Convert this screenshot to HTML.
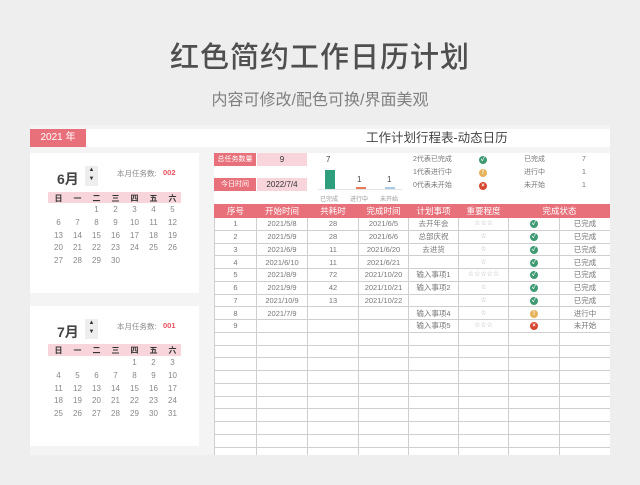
<!DOCTYPE html>
<html><head><meta charset="utf-8"><style>
*{margin:0;padding:0;box-sizing:border-box}
body{width:640px;height:485px;background:#eeeeee;position:relative;overflow:hidden;font-family:"Liberation Sans","Noto Sans CJK SC",sans-serif;color:#555}
.a{position:absolute;white-space:nowrap}
.c{text-align:center}
.wk div,.dy div{position:absolute;width:19px;text-align:center;font-size:8px}
.wk div{font-weight:bold;color:#333}
.dy div{color:#888}
.tw{position:absolute;left:214px;top:204px;width:396px;height:251px;overflow:hidden}
table{border-collapse:collapse;width:396px;table-layout:fixed}
td,th{height:12.75px;font-size:7.5px;text-align:center;border:1px solid #cfcfcf;color:#777;padding:0;line-height:11px;font-weight:normal;overflow:hidden}
th{background:#e8707a;color:#fff;font-size:8.5px;border-color:#e8707a;height:13px}
.ic{display:inline-block;width:8px;height:8px;border-radius:50%;color:#fff;font-size:6px;line-height:8px;vertical-align:middle;font-weight:bold;text-align:center}
.g{background:#3f9a72}.o{background:#e6b25a}.r{background:#d6472f}
.st{color:#aaa;font-size:7px;font-family:"DejaVu Sans",sans-serif;line-height:11px}
</style></head><body>
<div class="a c" style="left:0;width:640px;top:34px;font-size:29px;color:#4f4f4f;letter-spacing:1px;font-weight:500">红色简约工作日历计划</div>
<div class="a c" style="left:0;width:640px;top:86px;font-size:16px;color:#808080">内容可修改/配色可换/界面美观</div>

<div class="a" style="left:30px;top:125px;width:580px;height:330px;background:#f4f4f4"></div>
<div class="a" style="left:30px;top:129px;width:580px;height:18px;background:#fff"></div>
<div class="a c" style="left:30px;top:129px;width:56px;height:18px;background:#e8707a;color:#fff;font-size:10px;line-height:18px">2021 年</div>
<div class="a" style="left:366px;top:129px;font-size:12.5px;color:#444;line-height:18px">工作计划行程表-动态日历</div>

<div class="a" style="left:30px;top:153px;width:169px;height:140px;background:#fff"></div>
<div class="a" style="left:57px;top:169px;font-size:14px;font-weight:bold;color:#444">6月</div>
<div class="a c" style="left:85px;top:166px;width:13px;height:20px;background:#eee;font-size:6px;line-height:9px;color:#333">▲<br>▼</div>
<div class="a" style="left:117px;top:168px;font-size:7.5px;color:#888">本月任务数:</div>
<div class="a" style="left:163px;top:168px;font-size:7.5px;color:#e8505e;font-weight:bold">002</div>
<div class="a" style="left:48px;top:192px;width:133px;height:11px;background:#f7d5da"></div>
<div class="a wk" style="left:0;top:193px">
<div style="left:49px">日</div><div style="left:68px">一</div><div style="left:87px">二</div><div style="left:106px">三</div><div style="left:125px">四</div><div style="left:144px">五</div><div style="left:163px">六</div></div>
<div class="a dy" style="left:0;top:205px">
<div style="left:87px;top:0">1</div><div style="left:106px;top:0">2</div><div style="left:125px;top:0">3</div><div style="left:144px;top:0">4</div><div style="left:163px;top:0">5</div>
<div style="left:49px;top:13px">6</div><div style="left:68px;top:13px">7</div><div style="left:87px;top:13px">8</div><div style="left:106px;top:13px">9</div><div style="left:125px;top:13px">10</div><div style="left:144px;top:13px">11</div><div style="left:163px;top:13px">12</div>
<div style="left:49px;top:26px">13</div><div style="left:68px;top:26px">14</div><div style="left:87px;top:26px">15</div><div style="left:106px;top:26px">16</div><div style="left:125px;top:26px">17</div><div style="left:144px;top:26px">18</div><div style="left:163px;top:26px">19</div>
<div style="left:49px;top:38px">20</div><div style="left:68px;top:38px">21</div><div style="left:87px;top:38px">22</div><div style="left:106px;top:38px">23</div><div style="left:125px;top:38px">24</div><div style="left:144px;top:38px">25</div><div style="left:163px;top:38px">26</div>
<div style="left:49px;top:51px">27</div><div style="left:68px;top:51px">28</div><div style="left:87px;top:51px">29</div><div style="left:106px;top:51px">30</div></div>

<div class="a" style="left:30px;top:306px;width:169px;height:140px;background:#fff"></div>
<div class="a" style="left:57px;top:322px;font-size:14px;font-weight:bold;color:#444">7月</div>
<div class="a c" style="left:85px;top:319px;width:13px;height:20px;background:#eee;font-size:6px;line-height:9px;color:#333">▲<br>▼</div>
<div class="a" style="left:117px;top:321px;font-size:7.5px;color:#888">本月任务数:</div>
<div class="a" style="left:163px;top:321px;font-size:7.5px;color:#e8505e;font-weight:bold">001</div>
<div class="a" style="left:48px;top:344px;width:133px;height:12px;background:#f7d5da"></div>
<div class="a wk" style="left:0;top:345px">
<div style="left:49px">日</div><div style="left:68px">一</div><div style="left:87px">二</div><div style="left:106px">三</div><div style="left:125px">四</div><div style="left:144px">五</div><div style="left:163px">六</div></div>
<div class="a dy" style="left:0;top:358px">
<div style="left:125px;top:0">1</div><div style="left:144px;top:0">2</div><div style="left:163px;top:0">3</div>
<div style="left:49px;top:13px">4</div><div style="left:68px;top:13px">5</div><div style="left:87px;top:13px">6</div><div style="left:106px;top:13px">7</div><div style="left:125px;top:13px">8</div><div style="left:144px;top:13px">9</div><div style="left:163px;top:13px">10</div>
<div style="left:49px;top:26px">11</div><div style="left:68px;top:26px">12</div><div style="left:87px;top:26px">13</div><div style="left:106px;top:26px">14</div><div style="left:125px;top:26px">15</div><div style="left:144px;top:26px">16</div><div style="left:163px;top:26px">17</div>
<div style="left:49px;top:38px">18</div><div style="left:68px;top:38px">19</div><div style="left:87px;top:38px">20</div><div style="left:106px;top:38px">21</div><div style="left:125px;top:38px">22</div><div style="left:144px;top:38px">23</div><div style="left:163px;top:38px">24</div>
<div style="left:49px;top:51px">25</div><div style="left:68px;top:51px">26</div><div style="left:87px;top:51px">27</div><div style="left:106px;top:51px">28</div><div style="left:125px;top:51px">29</div><div style="left:144px;top:51px">30</div><div style="left:163px;top:51px">31</div></div>

<div class="a" style="left:214px;top:153px;width:396px;height:302px;background:#fff"></div>
<div class="a c" style="left:214px;top:153px;width:42px;height:13px;background:#e8707a;color:#fff;font-size:7px;line-height:13px">总任务数量</div>
<div class="a c" style="left:257px;top:153px;width:50px;height:13px;background:#f7d5da;color:#333;font-size:8px;line-height:13px">9</div>
<div class="a c" style="left:214px;top:178px;width:42px;height:13px;background:#e8707a;color:#fff;font-size:7px;line-height:13px">今日时间</div>
<div class="a c" style="left:257px;top:178px;width:50px;height:13px;background:#f7d5da;color:#333;font-size:8px;line-height:13px">2022/7/4</div>

<div class="a" style="left:326px;top:155px;font-size:8px;color:#444">7</div>
<div class="a" style="left:325px;top:170px;width:10px;height:19px;background:#2f9e7c"></div>
<div class="a" style="left:357px;top:175px;font-size:8px;color:#444">1</div>
<div class="a" style="left:356px;top:187px;width:10px;height:2px;background:#e87a5a"></div>
<div class="a" style="left:387px;top:175px;font-size:8px;color:#444">1</div>
<div class="a" style="left:385px;top:187px;width:10px;height:2px;background:#a9c9e8"></div>
<div class="a" style="left:318px;top:189px;width:84px;height:1px;background:#e4e4e4"></div>
<div class="a" style="left:320px;top:194px;font-size:6px;color:#999">已完成</div>
<div class="a" style="left:350px;top:194px;font-size:6px;color:#999">进行中</div>
<div class="a" style="left:380px;top:194px;font-size:6px;color:#999">未开始</div>

<div class="a" style="left:413px;top:153px;font-size:7px;color:#777;line-height:13px">2代表已完成<br>1代表进行中<br>0代表未开始</div>
<div class="a" style="left:479px;top:153px;line-height:13px"><span class="ic g">✓</span><br><span class="ic o">!</span><br><span class="ic r">×</span></div>
<div class="a" style="left:524px;top:153px;font-size:7px;color:#777;line-height:13px">已完成<br>进行中<br>未开始</div>
<div class="a" style="left:582px;top:153px;font-size:7px;color:#777;line-height:13px">7<br>1<br>1</div>

<div class="tw"><table>
<colgroup><col style="width:42px"><col style="width:51px"><col style="width:51px"><col style="width:50px"><col style="width:50px"><col style="width:50px"><col style="width:51px"><col style="width:51px"></colgroup>
<tr><th>序号</th><th>开始时间</th><th>共耗时</th><th>完成时间</th><th>计划事项</th><th>重要程度</th><th colspan="2">完成状态</th></tr>
<tr><td>1</td><td>2021/5/8</td><td>28</td><td>2021/6/5</td><td>去开年会</td><td class="st">☆☆☆</td><td><span class="ic g">✓</span></td><td>已完成</td></tr>
<tr><td>2</td><td>2021/5/9</td><td>28</td><td>2021/6/6</td><td>总部庆祝</td><td class="st">☆</td><td><span class="ic g">✓</span></td><td>已完成</td></tr>
<tr><td>3</td><td>2021/6/9</td><td>11</td><td>2021/6/20</td><td>去进货</td><td class="st">☆</td><td><span class="ic g">✓</span></td><td>已完成</td></tr>
<tr><td>4</td><td>2021/6/10</td><td>11</td><td>2021/6/21</td><td></td><td class="st">☆</td><td><span class="ic g">✓</span></td><td>已完成</td></tr>
<tr><td>5</td><td>2021/8/9</td><td>72</td><td>2021/10/20</td><td>输入事项1</td><td class="st">☆☆☆☆☆</td><td><span class="ic g">✓</span></td><td>已完成</td></tr>
<tr><td>6</td><td>2021/9/9</td><td>42</td><td>2021/10/21</td><td>输入事项2</td><td class="st">☆</td><td><span class="ic g">✓</span></td><td>已完成</td></tr>
<tr><td>7</td><td>2021/10/9</td><td>13</td><td>2021/10/22</td><td></td><td class="st">☆</td><td><span class="ic g">✓</span></td><td>已完成</td></tr>
<tr><td>8</td><td>2021/7/9</td><td></td><td></td><td>输入事项4</td><td class="st">☆</td><td><span class="ic o">!</span></td><td>进行中</td></tr>
<tr><td>9</td><td></td><td></td><td></td><td>输入事项5</td><td class="st">☆☆☆</td><td><span class="ic r">×</span></td><td>未开始</td></tr>
<tr><td></td><td></td><td></td><td></td><td></td><td></td><td></td><td></td></tr>
<tr><td></td><td></td><td></td><td></td><td></td><td></td><td></td><td></td></tr>
<tr><td></td><td></td><td></td><td></td><td></td><td></td><td></td><td></td></tr>
<tr><td></td><td></td><td></td><td></td><td></td><td></td><td></td><td></td></tr>
<tr><td></td><td></td><td></td><td></td><td></td><td></td><td></td><td></td></tr>
<tr><td></td><td></td><td></td><td></td><td></td><td></td><td></td><td></td></tr>
<tr><td></td><td></td><td></td><td></td><td></td><td></td><td></td><td></td></tr>
<tr><td></td><td></td><td></td><td></td><td></td><td></td><td></td><td></td></tr>
<tr><td></td><td></td><td></td><td></td><td></td><td></td><td></td><td></td></tr>
<tr><td></td><td></td><td></td><td></td><td></td><td></td><td></td><td></td></tr>
<tr><td></td><td></td><td></td><td></td><td></td><td></td><td></td><td></td></tr>
</table></div>
</body></html>
